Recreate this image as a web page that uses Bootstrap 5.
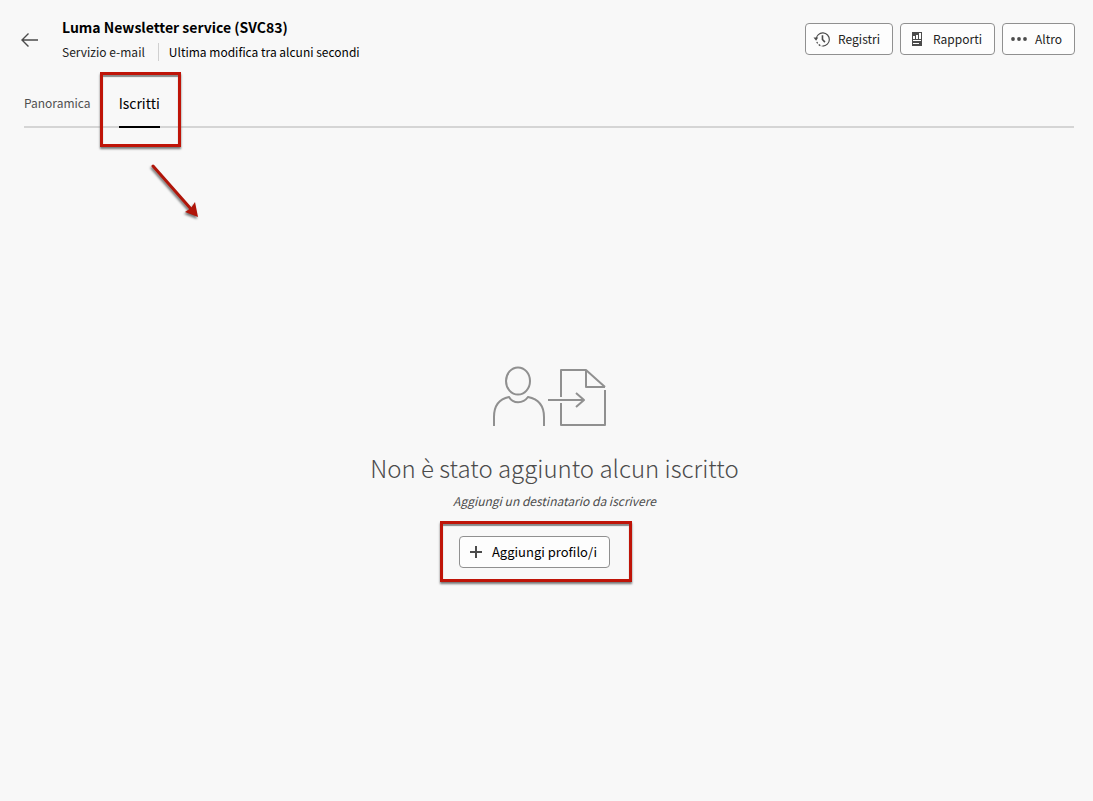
<!DOCTYPE html>
<html lang="it">
<head>
<meta charset="utf-8">
<meta name="viewport" content="width=device-width, initial-scale=1">
<title>Luma Newsletter service</title>
<link href="https://cdn.jsdelivr.net/npm/bootstrap@5.3.0/dist/css/bootstrap.min.css" rel="stylesheet">
<style>
  body { background: #f8f8f8; color: #222; font-family: "Noto Sans CJK JP", "Open Sans", sans-serif; font-size: 12px; line-height: 20px; }
  .page-head { padding: 17px 18px 0 20px; }
  .page-title { font-size: 14px; line-height: 20px; font-weight: 700; color: #000; }
  .back-link { color: #4b4b4b; margin-right: 23px; }
  .meta-row { margin-top: 5px; }
  .meta-sep { width: 1px; height: 18px; background: #d0d0d0; margin: 0 10px 0 13px; }
  .btn-tool { --bs-btn-bg: #fdfdfd; --bs-btn-color: #222; --bs-btn-border-color: #909090; --bs-btn-border-radius: 4px; --bs-btn-font-size: 12px; --bs-btn-line-height: 20px; --bs-btn-padding-y: 5px; padding-left: 8px; padding-right: 12px; }
  .btn-add { --bs-btn-font-size: 13px; }
  .btn-tool svg { color: #4b4b4b; }
  .tool-row { gap: 7px; padding-top: 6px; }
  .tab-bar { margin: 31px 19px 0 24px; border-bottom: 2px solid #d5d5d5; gap: 28px; }
  .tab-bar a { color: #505050; text-decoration: none; padding-bottom: 13px; margin-bottom: -2px; border-bottom: 2px solid transparent; }
  .tab-bar a.active { color: #000; font-size: 14px; border-color: #000; }
  .callout-frame { position: absolute; border: 3px solid #bf1408; box-shadow: 0 2px 2px #777, inset 0 2px 1px #888; pointer-events: none; }
  .frame-tab { inset: -21px -21px -21px -19px; }
  .frame-add { inset: -15px -22px -14px -19px; }
  .callout-arrow { position: absolute; left: 148px; top: 160px; }
  .empty-state { padding: 238px 0 0 16px; }
  .empty-art { margin-right: 12px; }
  .empty-title { font-size: 24px; line-height: 36px; font-weight: 300; color: #4b4b4b; margin-top: 22px; }
  .empty-hint { color: #4b4b4b; font-style: italic; margin-top: 5px; }
  .add-wrap { margin: 25px 40px 0 0; }
</style>
</head>
<body class="min-vh-100">
<header class="page-head d-flex justify-content-between align-items-start">
  <div class="d-flex align-items-center">
    <a href="#" class="back-link d-flex" aria-label="Indietro"><svg width="19" height="18" viewBox="0 0 19 18" fill="none" stroke="currentColor" stroke-width="1.4"><path d="M18 9H2M8.500 2.500L2 9l6.500 6.500"/></svg></a>
    <div>
      <h1 class="page-title mb-0">Luma Newsletter service (SVC83)</h1>
      <div class="meta-row d-flex align-items-center"><span>Servizio e-mail</span><span class="meta-sep"></span><span class="text-black">Ultima modifica tra alcuni secondi</span></div>
    </div>
  </div>
  <div class="tool-row d-flex">
    <button type="button" class="btn btn-tool d-flex align-items-center gap-2"><svg width="16" height="17" viewBox="0 0 17 17" fill="none" stroke="currentColor" overflow="visible"><path stroke-width="1.200" d="M2.300 8A7 7 0 1 1 9.300 15.500"/><path stroke-width="1.300" stroke-dasharray="2 1.500" d="M3 11A7 7 0 0 0 9 15.500"/><path fill="currentColor" stroke="none" d="M-.500 6.500h5L2.200 9.700z"/><path stroke-width="1.700" d="M9 4v4.500l2.600 2.800"/></svg>Registri</button>
    <button type="button" class="btn btn-tool d-flex align-items-center gap-2"><svg width="16" height="16" viewBox="0 0 16 16"><path fill="currentColor" d="M3 1h10v14H3z"/><path fill="#fdfdfd" d="M4 5h2v3H4zM7 4h2v4H7zM10 2h2v6h-2zM4 9h8v1H4zM4 12h6v1H4z"/></svg>Rapporti</button>
    <button type="button" class="btn btn-tool d-flex align-items-center gap-2"><svg width="16" height="16" viewBox="0 0 16 16" fill="currentColor"><circle cx="2" cy="8" r="1.900"/><circle cx="8" cy="8" r="1.900"/><circle cx="14" cy="8" r="1.900"/></svg>Altro</button>
  </div>
</header>
<nav class="tab-bar d-flex">
  <a href="#">Panoramica</a>
  <a href="#" class="active position-relative" aria-current="page">Iscritti<span class="callout-frame frame-tab"></span></a>
</nav>
<svg class="callout-arrow" width="56" height="64" viewBox="0 0 56 64" style="filter:drop-shadow(-1px 2px 1px #777)"><path d="M5 6l38 43" stroke="#b01509" stroke-width="3" stroke-linecap="round"/><path fill="#b01509" d="M50 57l-3-15-4 6-6 4z"/></svg>
<main class="empty-state d-flex flex-column align-items-center text-center">
  <svg class="empty-art" width="116" height="62" viewBox="0 0 116 62" fill="none" stroke="#909090" stroke-width="2"><ellipse cx="27" cy="15" rx="12" ry="13.500"/><path d="M3 60V51C3 40 8 33 18 31C22 38 32 38 37 31C47 33 53 40 53 51V60"/><path d="M57 34H93M85 27l8 7-8 7M70 31V4H95L114 21M114 24V59H70V37M95 4V21H114" stroke-linejoin="round"/></svg>
  <h2 class="empty-title mb-0">Non è stato aggiunto alcun iscritto</h2>
  <p class="empty-hint mb-0">Aggiungi un destinatario da iscrivere</p>
  <div class="add-wrap position-relative">
    <button type="button" class="btn btn-tool btn-add text-black d-flex align-items-center gap-2"><svg width="16" height="16" viewBox="0 0 16 16" stroke="currentColor" stroke-width="2"><path d="M8 2v12M2 8h12"/></svg>Aggiungi profilo/i</button>
    <span class="callout-frame frame-add"></span>
  </div>
</main>
<script src="https://cdn.jsdelivr.net/npm/bootstrap@5.3.0/dist/js/bootstrap.bundle.min.js"></script>
</body>
</html>
